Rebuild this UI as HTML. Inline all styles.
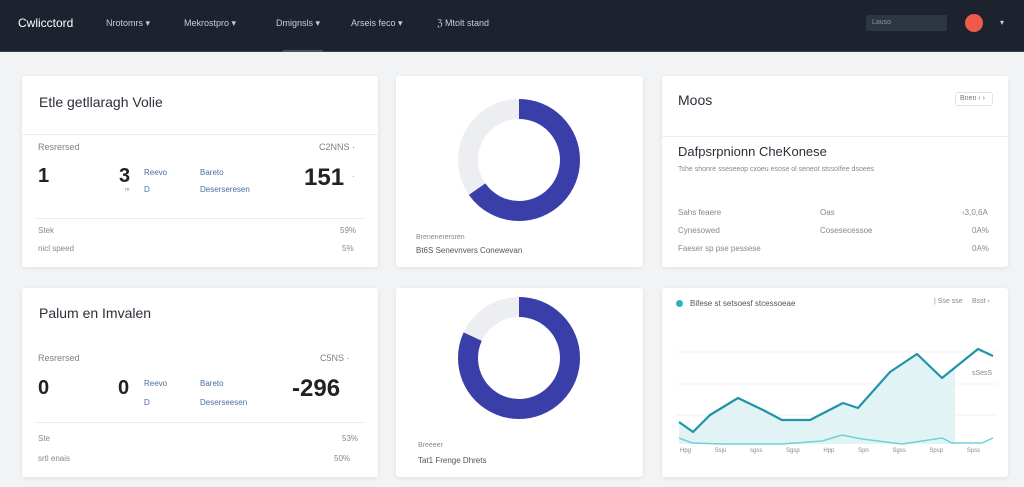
<!DOCTYPE html><html><head><style>
*{margin:0;padding:0;box-sizing:border-box}
body{width:1024px;height:487px;background:#f1f3f5;font-family:"Liberation Sans",sans-serif;position:relative;overflow:hidden;color:#2a2f38}
.nav{position:absolute;left:0;top:0;width:1024px;height:52px;background:#1d232e;border-bottom:1px solid #3a4250}
.nav span{position:absolute;top:18px;font-size:9px;color:#c9ced8}
.card{position:absolute;background:#fff;border-radius:3px;box-shadow:0 1px 4px rgba(0,0,0,.08)}
.t{position:absolute;font-size:10px;color:#7a808a}
.s{position:absolute;font-size:8px;color:#888}
.b{position:absolute;font-size:8px;color:#4a6fa0}
.big{position:absolute;font-size:20px;font-weight:bold;color:#222}
.h{position:absolute;font-size:14px;color:#2a2f38}
.hr{position:absolute;left:0;right:0;height:1px;background:#eceef1}
</style></head><body>
<div class="nav">
<span style="left:18px;font-size:12px;color:#fff;top:16px">Cwlicctord</span>
<span style="left:106px">Nrotomrs ▾</span>
<span style="left:184px">Mekrostpro ▾</span>
<span style="left:276px">Dmignsls ▾</span>
<span style="left:351px">Arseis feco ▾</span>
<span style="left:437px">ℨ Mtolt stand</span>
<div style="position:absolute;left:866px;top:15px;width:81px;height:16px;background:#2e3543;border-radius:2px;font-size:7px;color:#8a92a0;padding:4px 6px">Lauso</div>
<div style="position:absolute;left:965px;top:14px;width:18px;height:18px;border-radius:50%;background:#f05a4a"></div>
<span style="left:1000px;top:18px;font-size:8px">▾</span>
<div style="position:absolute;left:283px;top:50px;width:40px;height:2px;background:#4a5262"></div>
</div>

<div class="card" style="left:22px;top:76px;width:356px;height:191px">
<div class="h" style="left:17px;top:18px">Etle getllaragh Volie</div>
<div class="hr" style="top:58px"></div>
<div class="t" style="left:16px;top:66px;font-size:9px">Resrersed</div>
<div class="t" style="left:297px;top:66px;font-size:9px">C2NNS ·</div>
<div class="big" style="left:16px;top:89px">1</div>
<div class="big" style="left:97px;top:89px">3</div>
<div class="b" style="left:122px;top:92px">Reevo</div><div class="b" style="left:178px;top:92px">Bareto</div>
<div class="s" style="left:103px;top:110px">ᵐ</div><div class="b" style="left:122px;top:109px">D</div><div class="b" style="left:178px;top:109px">Deserseresen</div>
<div class="big" style="left:282px;top:88px;font-size:24px">151</div>
<div class="s" style="left:330px;top:96px">·</div>
<div class="hr" style="top:142px;left:12px;right:12px"></div>
<div class="s" style="left:16px;top:150px">Stek</div><div class="s" style="left:318px;top:150px">59%</div>
<div class="s" style="left:16px;top:168px">nicl speed</div><div class="s" style="left:320px;top:168px">5%</div>
</div>

<div class="card" style="left:22px;top:288px;width:356px;height:189px">
<div class="h" style="left:17px;top:17px">Palum en Imvalen</div>
<div class="t" style="left:16px;top:65px;font-size:9px">Resrersed</div>
<div class="t" style="left:298px;top:65px;font-size:9px">C5NS ·</div>
<div class="big" style="left:16px;top:89px">0</div>
<div class="big" style="left:96px;top:89px">0</div>
<div class="b" style="left:122px;top:91px">Reevo</div><div class="b" style="left:178px;top:91px">Bareto</div>
<div class="b" style="left:122px;top:110px">D</div><div class="b" style="left:178px;top:110px">Deserseesen</div>
<div class="big" style="left:270px;top:87px;font-size:24px">-296</div>
<div class="hr" style="top:134px;left:12px;right:12px"></div>
<div class="s" style="left:16px;top:146px">Ste</div><div class="s" style="left:320px;top:146px">53%</div>
<div class="s" style="left:16px;top:166px">srtl enais</div><div class="s" style="left:312px;top:166px">50%</div>
</div>

<div class="card" style="left:396px;top:76px;width:247px;height:191px">
<svg style="position:absolute;left:0;top:0" width="247" height="191">
<circle cx="123" cy="84" r="51" fill="none" stroke="#eceef2" stroke-width="20"/>
<circle cx="123" cy="84" r="51" fill="none" stroke="#3a3ea8" stroke-width="20" stroke-dasharray="209 400" transform="rotate(-90 123 84)"/>
</svg>
<div class="s" style="left:20px;top:158px;font-size:7px">Brenenerersren</div>
<div class="s" style="left:20px;top:170px;color:#555">Bt6S Senevnvers Conewevan</div>
</div>

<div class="card" style="left:396px;top:288px;width:247px;height:189px">
<svg style="position:absolute;left:0;top:0" width="247" height="189">
<circle cx="123" cy="70" r="51" fill="none" stroke="#eceef2" stroke-width="20"/>
<circle cx="123" cy="70" r="51" fill="none" stroke="#3a3ea8" stroke-width="20" stroke-dasharray="262 400" transform="rotate(-90 123 70)"/>
</svg>
<div class="s" style="left:22px;top:154px;font-size:7px">Breeeer</div>
<div class="s" style="left:22px;top:168px;color:#555">Tat1 Frenge Dhrets</div>
</div>

<div class="card" style="left:662px;top:76px;width:346px;height:191px">
<div class="h" style="left:16px;top:16px">Moos</div>
<div style="position:absolute;left:293px;top:16px;width:38px;height:14px;border:1px solid #e0e2e6;border-radius:3px;font-size:7px;color:#777;padding:2px 4px">Bnen ‹ ›</div>
<div class="hr" style="top:60px"></div>
<div class="h" style="left:16px;top:68px;font-size:13px">Dafpsrpnionn CheKonese</div>
<div class="s" style="left:16px;top:90px;font-size:7px">Tshe shonre sseseeop cxoeu esose ol seneot stssoIfee dsoees</div>
<div class="s" style="left:16px;top:132px">Sahs feaere</div><div class="s" style="left:158px;top:132px">Oas</div><div class="s" style="left:300px;top:132px">‹3,0,6A</div>
<div class="s" style="left:16px;top:150px">Cynesowed</div><div class="s" style="left:158px;top:150px">Cosesecessoe</div><div class="s" style="left:310px;top:150px">0A%</div>
<div class="s" style="left:16px;top:168px">Faeser sp pse pessese</div><div class="s" style="left:310px;top:168px">0A%</div>
</div>

<div class="card" style="left:662px;top:288px;width:346px;height:189px">
<div style="position:absolute;left:14px;top:12px;width:7px;height:7px;border-radius:50%;background:#2ab2c4"></div>
<div class="s" style="left:28px;top:11px;color:#555">Bifese st setsoesf stcessoeae</div>
<div class="s" style="left:272px;top:10px;font-size:7px">| Sse sse</div>
<div class="s" style="left:310px;top:10px;font-size:7px">Bsst ›</div>
<div class="s" style="left:310px;top:82px;font-size:7px">sSesS</div>
<svg style="position:absolute;left:0;top:0" width="346" height="189">
<line x1="14" y1="64" x2="335" y2="64" stroke="#f1f2f4"/>
<line x1="14" y1="96" x2="335" y2="96" stroke="#f1f2f4"/>
<line x1="14" y1="127" x2="335" y2="127" stroke="#f1f2f4"/>
<path d="M17 134 L31 144 L48 127 L76 110 L101 122 L120 132 L148 132 L181 115 L196 120 L228 84 L255 66 L280 90 L293 78 L293 156 L17 156Z" fill="#e2f3f5"/>
<path d="M17 134 L31 144 L48 127 L76 110 L101 122 L120 132 L148 132 L181 115 L196 120 L228 84 L255 66 L280 90 L316 61 L331 68" fill="none" stroke="#1f93a8" stroke-width="2.2" stroke-linejoin="round"/>
<path d="M17 150 L30 155 L60 156 L120 156 L160 153 L180 147 L200 151 L240 156 L280 150 L290 155 L320 155 L331 150" fill="none" stroke="#6fd0d8" stroke-width="1.5"/>
</svg>
<div class="s" style="left:18px;top:160px;font-size:6px;word-spacing:22px">Hpg Ssju sgss Sgsp Hpp Spn Sgss Spsp Spss</div>
</div>
</body></html>
